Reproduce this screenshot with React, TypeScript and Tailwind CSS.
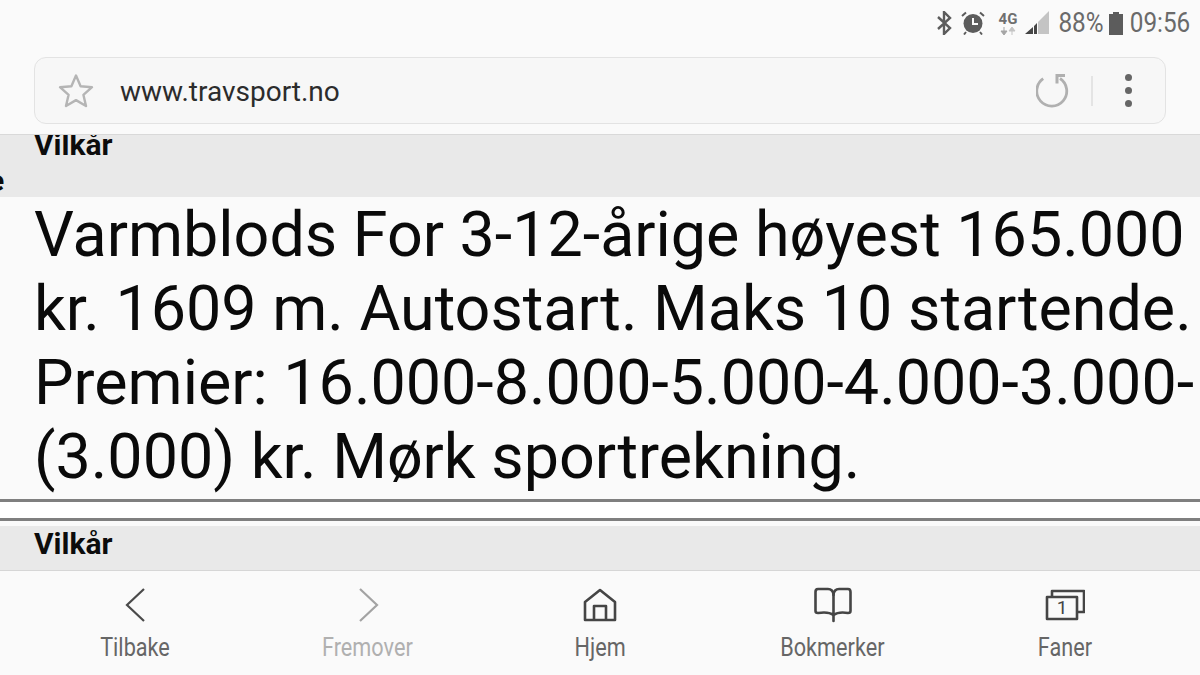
import React from "react";

const NAV = [
  { label: "Tilbake", dim: false, icon: "back" },
  { label: "Fremover", dim: true, icon: "forward" },
  { label: "Hjem", dim: false, icon: "home" },
  { label: "Bokmerker", dim: false, icon: "book" },
  { label: "Faner", dim: false, icon: "tabs" },
];

const NavIcon = ({ name }: { name: string }) => {
  if (name === "back") {
    return (
      <svg width="40" height="40" viewBox="0 0 40 40" fill="none" stroke="#4a4a4a" strokeWidth="2.2">
        <path d="M29 3 L12 19 L29 35" />
      </svg>
    );
  }
  if (name === "forward") {
    return (
      <svg width="40" height="40" viewBox="0 0 40 40" fill="none" stroke="#a3a3a3" strokeWidth="2.2">
        <path d="M12 3 L29 19 L12 35" />
      </svg>
    );
  }
  if (name === "home") {
    return (
      <svg width="40" height="40" viewBox="0 0 40 40" fill="none" stroke="#454545" strokeWidth="2.6" strokeLinejoin="round">
        <path d="M20 4 L5 16 V34 H35 V16 Z M14 34 V20 H26 V34" />
      </svg>
    );
  }
  if (name === "book") {
    return (
      <svg width="40" height="40" viewBox="0 0 40 40" fill="none" stroke="#454545" strokeWidth="2.6" strokeLinejoin="round" strokeLinecap="round">
        <path d="M21.5 35 V9 C21.5 5 19 3 16 3 H6 C4 3 3.5 4 3.5 6 V25 C3.5 26.5 5 27 6 27 C12 26 18 26.5 21.5 29" />
        <path d="M21.5 9 C21.5 5 24 3 27 3 H36 C38 3 38.5 4 38.5 6 V25 C38.5 26.5 37 27 36 27 C30 26 25 26.5 21.5 29" />
      </svg>
    );
  }
  return (
    <svg width="40" height="40" viewBox="0 0 40 40" fill="none" stroke="#454545" strokeWidth="2.6" strokeLinejoin="round">
      <path d="M7 11 V5 H39 V26 H32" />
      <rect x="2" y="11" width="30" height="22" />
      <text x="17" y="28" textAnchor="middle" fontSize="19" fontFamily="Roboto, sans-serif" fill="#454545" stroke="none">1</text>
    </svg>
  );
};

const VilkarBand = ({ children, className }: { children: React.ReactNode; className: string }) => (
  <div className={`overflow-hidden bg-[#e9e9e9] font-bold text-[30px] text-[#0c0c0c] ${className}`}>{children}</div>
);

export default function App() {
  return (
    <div className="w-[1200px] h-[675px] overflow-hidden bg-[#fafafa] flex flex-col font-['Roboto',sans-serif]">
      <div className="h-[135px] shrink-0 border-b border-[#d9d9d9] flex flex-col">
        <div className="h-[46px] shrink-0 flex items-center justify-end pr-[9px] text-[#6a6a6a]">
          <svg width="16" height="24" viewBox="0 0 16 24" fill="none" stroke="#5c5c5c" strokeWidth="2.4" className="mr-[9px]">
            <path d="M2 6 L14 17 L8 23 V1 L14 7 L2 18" />
          </svg>
          <svg width="24" height="24" viewBox="0 0 24 24" className="mr-[14px]">
            <circle cx="12" cy="12.5" r="9.5" fill="#5c5c5c" />
            <path d="M12 7 V13 H17" fill="none" stroke="#fafafa" strokeWidth="2" />
            <path d="M1 5 L5 1.5 M23 5 L19 1.5 M5 21 L3 23.5 M19 21 L21 23.5" stroke="#5c5c5c" strokeWidth="2" />
          </svg>
          <div className="flex flex-col items-center w-[18px] mr-[8px] leading-none">
            <span className="text-[15px] font-bold text-[#6f6f6f] leading-[14px]">4G</span>
            <svg width="16" height="8" viewBox="0 0 16 8" className="mt-[1px]">
              <path d="M4 0 V4 M1 4 H7 L4 8 Z" fill="#a5a5a5" stroke="#a5a5a5" />
              <path d="M12 8 V4 M9 4 H15 L12 0 Z" fill="#c4c4c4" stroke="#c4c4c4" />
            </svg>
          </div>
          <svg width="24" height="24" viewBox="0 0 24 24" className="mr-[10px]">
            <path d="M24 0 V23 H13 V11 Z" fill="#c4c4c4" />
            <path d="M8 16 V23 H0 Z M9 15 L12 12 V23 H9 Z" fill="#454545" />
          </svg>
          <span className="w-[44px] flex justify-center text-[27px] scale-x-90">88%</span>
          <svg width="16" height="24" viewBox="0 0 16 24" className="mx-[5px]">
            <path d="M5 1 H11 V3 H15 V24 H1 V3 H5 Z" fill="#5c5c5c" />
          </svg>
          <span className="w-[62px] flex justify-center text-[27px] scale-x-90">09:56</span>
        </div>
        <div className="mx-[34px] mt-[11px] h-[67px] rounded-[12px] border border-[#e3e3e3] bg-[#f7f7f7] flex items-center">
          <svg width="36" height="36" viewBox="0 0 36 36" fill="none" stroke="#b5b5b5" strokeWidth="2.4" strokeLinejoin="round" className="ml-[23px]">
            <path d="M18 2.5 L22.6 13.2 L34 14.2 L25.4 21.8 L28 33 L18 27.1 L8 33 L10.6 21.8 L2 14.2 L13.4 13.2 Z" />
          </svg>
          <span className="ml-[26px] text-[28px] text-[#2c2c2c] flex-1 pt-[2px]">www.travsport.no</span>
          <svg width="36" height="36" viewBox="0 0 36 36" fill="none" stroke="#b0b0b0" strokeWidth="2.8" className="mr-[-2px]">
            <path d="M24 5.5 A15 15 0 1 1 7.2 5.7" />
            <path d="M29 2.5 H21 V10.5" strokeWidth="3" />
          </svg>
          <div className="w-[2px] h-[30px] bg-[#e4e4e4] ml-[21px]" />
          <div className="ml-[32px] mr-[33px] flex flex-col gap-[6px]">
            <div className="w-[7px] h-[7px] rounded-full bg-[#666]" />
            <div className="w-[7px] h-[7px] rounded-full bg-[#666]" />
            <div className="w-[7px] h-[7px] rounded-full bg-[#666]" />
          </div>
        </div>
      </div>

      <VilkarBand className="h-[62px] shrink-0 relative">
        <div className="pl-[34px] leading-[20px]">Vilkår</div>
        <div className="absolute left-[-12px] top-[23px]">e</div>
      </VilkarBand>

      <div className="h-[302px] shrink-0 pl-[34px] text-[62.8px] leading-[74px] text-[#0a0a0a] whitespace-nowrap">
        <div className="mt-[1px]">Varmblods For 3-12-årige høyest 165.000</div>
        <div>kr. 1609 m. Autostart. Maks 10 startende.</div>
        <div>Premier: 16.000-8.000-5.000-4.000-3.000-</div>
        <div>(3.000) kr. Mørk sportrekning.</div>
      </div>

      <div className="h-[3px] shrink-0 bg-[#7f7f7f]" />
      <div className="h-[16px] shrink-0 bg-white" />
      <div className="h-[3px] shrink-0 bg-[#7f7f7f]" />
      <div className="h-[5px] shrink-0" />

      <VilkarBand className="h-[45px] shrink-0 pl-[34px] leading-[36px] border-b border-[#d6d6d6]">Vilkår</VilkarBand>

      <div className="flex-1 grid grid-cols-5 px-[19px]">
        {NAV.map((item) => (
          <div key={item.label} className="flex flex-col items-center pt-[15px]">
            <NavIcon name={item.icon} />
            <span className={`mt-[7px] text-[25.5px] leading-[28px] scale-x-85 ${item.dim ? "text-[#b0b0b0]" : "text-[#666]"}`}>
              {item.label}
            </span>
          </div>
        ))}
      </div>
    </div>
  );
}
